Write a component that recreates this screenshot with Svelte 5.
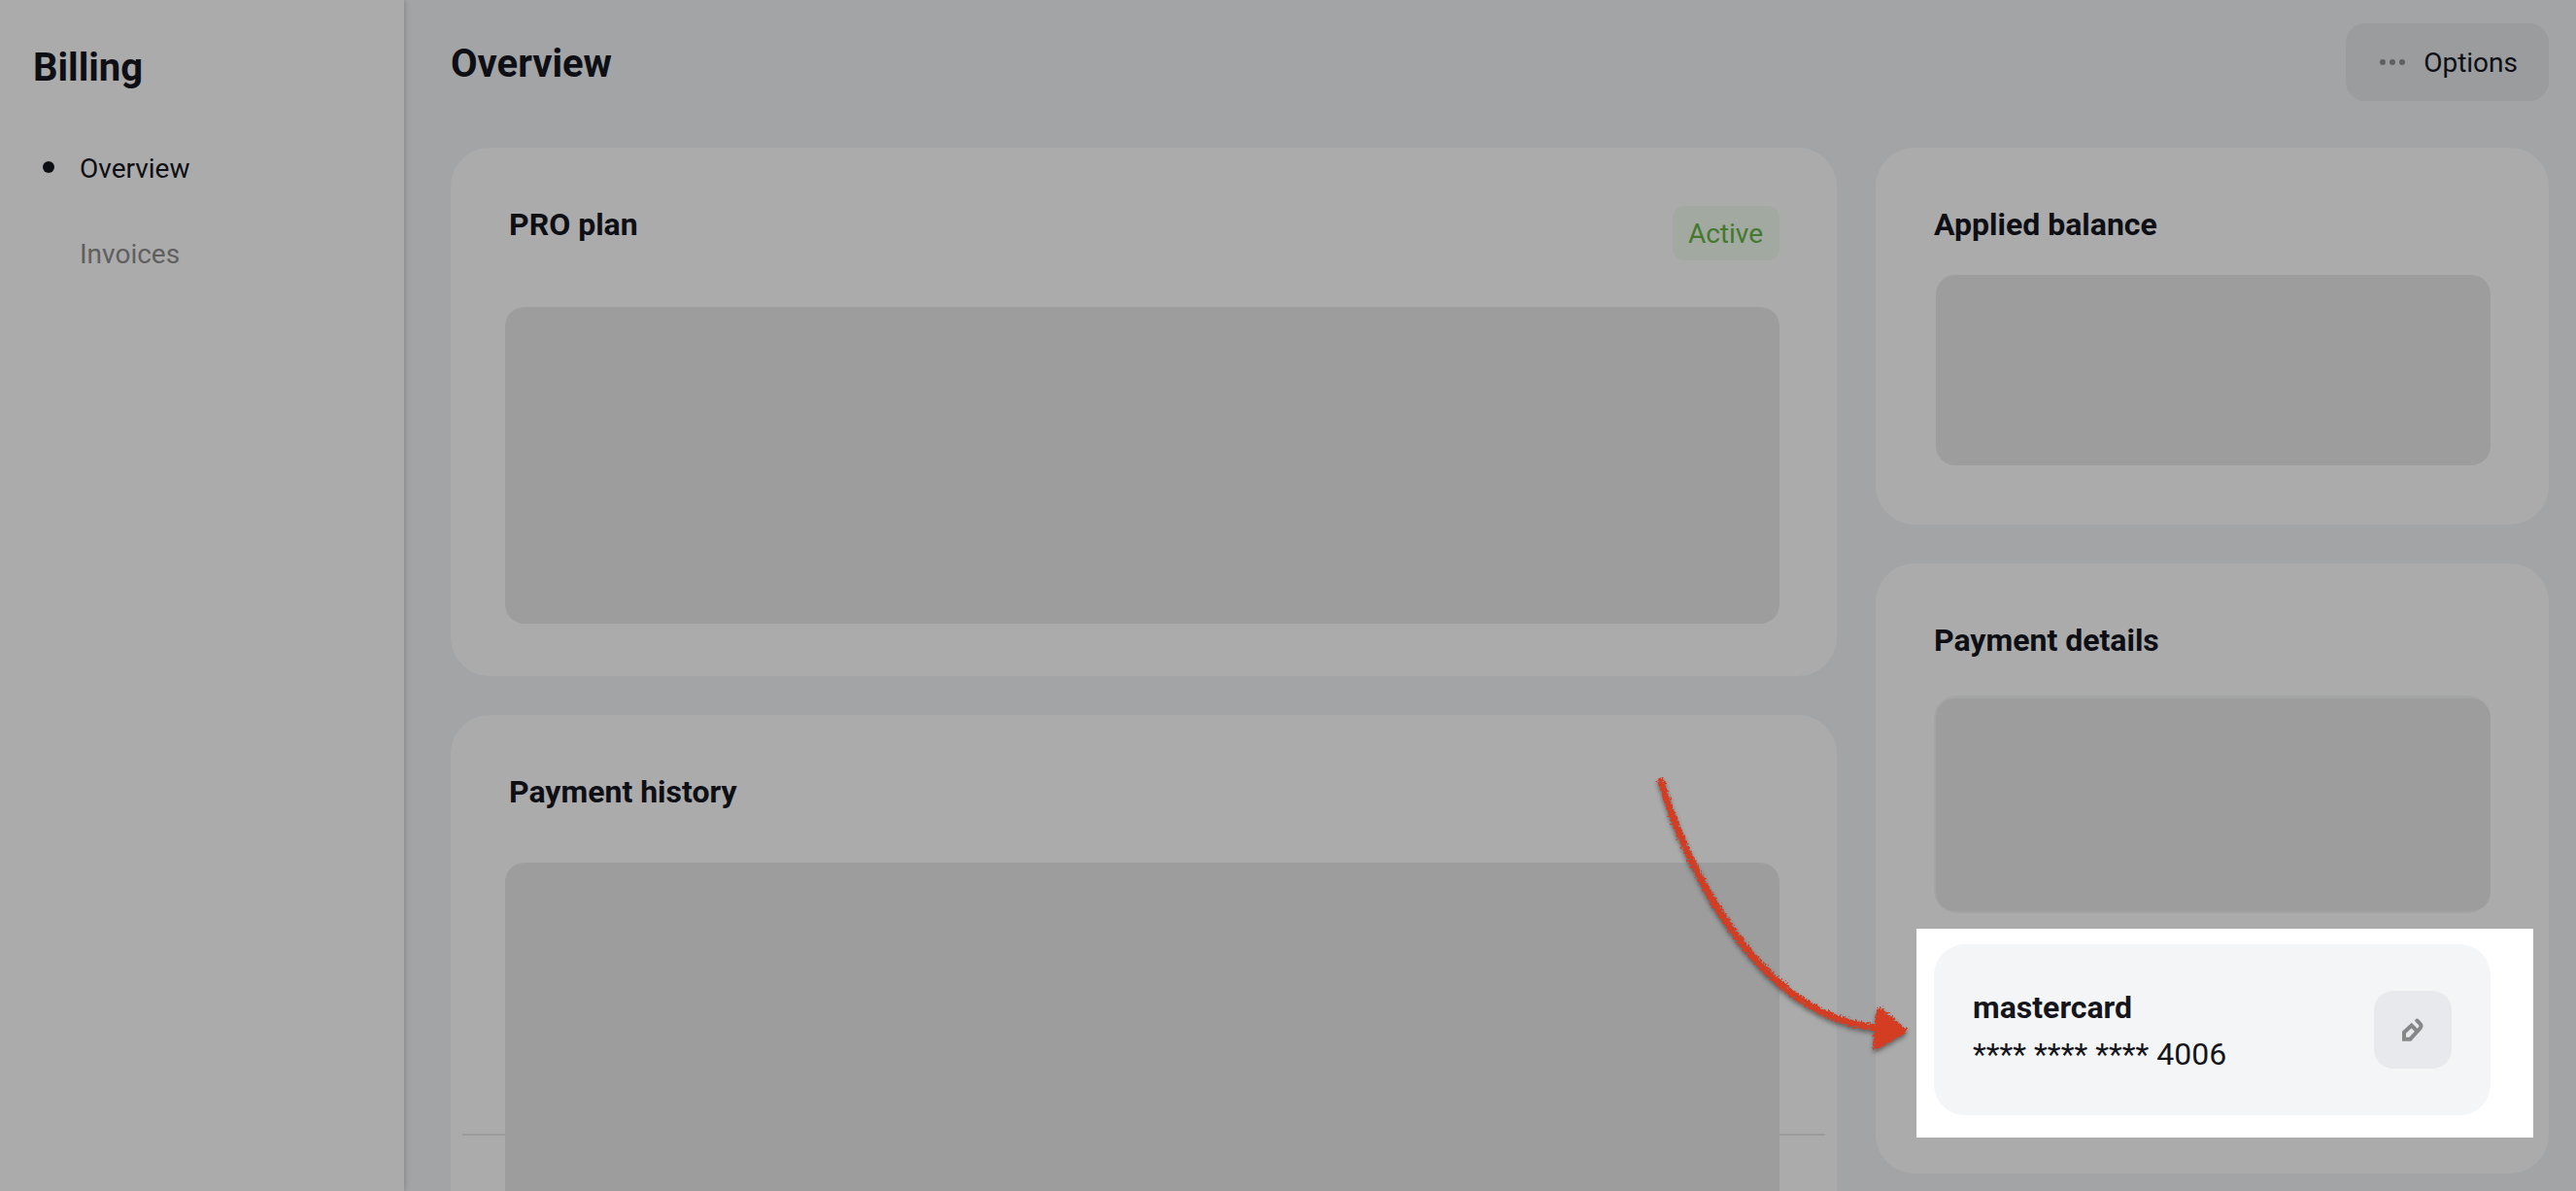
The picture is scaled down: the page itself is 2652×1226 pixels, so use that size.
<script>
  const navItems = [
    { label: 'Overview', active: true },
    { label: 'Invoices', active: false }
  ];

  export let card = {
    brand: 'mastercard',
    number: '**** **** **** 4006'
  };
</script>

<div class="layout">
  <aside class="sidebar">
    <h1 class="title">Billing</h1>
    <nav class="nav">
      {#each navItems as item}
        <a class="nav-item" class:active={item.active} href="#{item.label.toLowerCase()}">
          <span class="bullet"></span>
          {item.label}
        </a>
      {/each}
    </nav>
  </aside>

  <main class="main">
    <header class="header">
      <h2 class="title">Overview</h2>
      <button class="options-btn">
        <svg class="dots" viewBox="0 0 26 6" aria-hidden="true">
          <circle cx="3" cy="3" r="3" />
          <circle cx="13" cy="3" r="3" />
          <circle cx="23" cy="3" r="3" />
        </svg>
        <span class="options-label">Options</span>
      </button>
    </header>

    <div class="columns">
      <div class="column">
        <section class="card plan">
          <div class="card-head">
            <h3>PRO plan</h3>
            <span class="badge">Active</span>
          </div>
          <div class="block plan-block"></div>
        </section>

        <section class="card history">
          <h3>Payment history</h3>
          <div class="history-body">
            <hr class="row-line" />
            <div class="block history-block"></div>
          </div>
        </section>
      </div>

      <div class="column side">
        <section class="card balance">
          <h3>Applied balance</h3>
          <div class="block balance-block"></div>
        </section>

        <section class="card payment">
          <h3>Payment details</h3>
          <div class="details-box">
            <div class="block details-block"></div>
          </div>
          <div class="spotlight">
            <div class="method">
              <div class="method-text">
                <strong>{card.brand}</strong>
                <span>{card.number}</span>
              </div>
              <button class="edit-btn" aria-label="Edit payment method">
                <svg viewBox="0 0 24 26" aria-hidden="true">
                  <path d="M16.300 3.500L19.500 6.800Q21.500 9 19.500 11.500L9.300 22.700H3V15.700L10.700 8.500L16.500 14.500" />
                </svg>
              </button>
            </div>
          </div>
        </section>
      </div>
    </div>
  </main>

  <svg class="arrow" viewBox="0 0 270 290" aria-hidden="true">
    <defs>
      <filter id="crayon" x="-10%" y="-10%" width="120%" height="120%">
        <feTurbulence type="fractalNoise" baseFrequency="0.5" numOctaves="3" seed="4" result="noise" />
        <feDisplacementMap
          in="SourceGraphic"
          in2="noise"
          scale="8"
          xChannelSelector="R"
          yChannelSelector="G"
        />
      </filter>
    </defs>
    <g filter="url(#crayon)">
      <path class="shaft" d="M10 8C35 95 110 250 232 262" />
      <path class="head" d="M235 244L260 265L231 281Z" />
    </g>
  </svg>
</div>

<style>
  :global(body) {
    margin: 0;
    background: #a2a4a6;
  }

  .layout {
    position: relative;
    display: flex;
    height: 100vh;
    overflow: hidden;
    background: #a2a4a6;
    color: #0d0f14;
    font-family: Roboto, 'Liberation Sans', sans-serif;
    font-size: 28px;
    line-height: 40px;
  }

  .sidebar {
    flex: 0 0 416px;
    box-sizing: border-box;
    padding: 42px 34px;
    background: #ababab;
    box-shadow: 0 0 6px rgba(0, 0, 0, 0.25);
  }

  h1,
  h2,
  h3 {
    margin: 0;
    font-weight: 700;
  }

  .title {
    padding-top: 4px;
    font-size: 40px;
    line-height: 48px;
  }

  .nav {
    display: flex;
    flex-direction: column;
    gap: 48px;
    margin-top: 60px;
  }

  .nav-item {
    display: flex;
    align-items: flex-start;
    gap: 26px;
    padding-left: 10px;
    color: #5f5f60;
    text-decoration: none;
  }

  .bullet {
    width: 12px;
    height: 12px;
    margin-top: 12px;
    border-radius: 50%;
  }

  .active {
    color: #0d0f14;
  }

  .active .bullet {
    background: #0d0f14;
  }

  .main {
    flex: 1;
    min-width: 0;
    padding: 24px 28px 0 48px;
  }

  .header {
    display: flex;
    align-items: center;
    justify-content: space-between;
    margin-bottom: 48px;
  }

  button {
    border: none;
    color: inherit;
    font: inherit;
    cursor: pointer;
  }

  .options-btn {
    display: flex;
    align-items: center;
    gap: 19px;
    height: 80px;
    padding: 0 32px 0 35px;
    border-radius: 20px;
    background: #9b9c9e;
  }

  .options-label {
    padding-top: 2px;
  }

  .dots {
    width: 26px;
    height: 6px;
    fill: #5f6062;
  }

  .columns {
    display: flex;
    align-items: flex-start;
    gap: 40px;
  }

  .column {
    display: flex;
    flex: 1;
    flex-direction: column;
    gap: 40px;
    min-width: 0;
  }

  .side {
    flex: 0 0 693px;
  }

  .card {
    padding: 58px 60px;
    border-radius: 40px;
    background: #ababab;
  }

  h3 {
    font-size: 32px;
    line-height: 42px;
  }

  .card-head {
    display: flex;
    justify-content: space-between;
    align-items: flex-start;
  }

  .badge {
    margin-top: 2px;
    padding: 9px 17px 7px 16px;
    border-radius: 12px;
    background: #a2a9a0;
    color: #44782f;
  }

  .block {
    border-radius: 20px;
    background: #9d9d9d;
  }

  .plan {
    padding: 58px 59px 54px 56px;
  }

  .card-head h3 {
    padding-left: 4px;
  }

  .plan-block {
    height: 326px;
    margin-top: 48px;
  }

  .history {
    padding: 58px 12px 0;
  }

  .history h3 {
    padding-left: 48px;
  }

  .history-body {
    display: grid;
    margin-top: 52px;
  }

  .history-body > * {
    grid-area: 1 / 1;
  }

  .row-line {
    width: 100%;
    height: 2px;
    margin: 279px 0 0;
    border: none;
    background: #9b9b9b;
  }

  .history-block {
    height: 400px;
    margin: 0 47px 0 44px;
  }

  .balance-block {
    height: 196px;
    margin: 31px 0 3px 2px;
  }

  .payment {
    padding-bottom: 37px;
  }

  .details-box {
    margin-top: 36px;
    padding: 3px 0 2px 2px;
    border-radius: 24px;
    background: #a3a4a4;
  }

  .details-block {
    height: 219px;
  }

  .spotlight {
    margin: 16px -44px 0 -18px;
    padding: 16px 44px 23px 18px;
    background: #ffffff;
  }

  .method {
    display: flex;
    align-items: center;
    justify-content: space-between;
    padding: 39px 40px;
    border-radius: 32px;
    background: #f4f5f7;
    color: #14161c;
    font-size: 32px;
    line-height: 48px;
  }

  .method-text {
    display: flex;
    flex-direction: column;
    padding-top: 2px;
  }

  .edit-btn {
    display: flex;
    align-items: center;
    justify-content: center;
    width: 80px;
    height: 80px;
    padding: 0;
    border-radius: 20px;
    background: #e8e9ed;
  }

  .edit-btn svg {
    width: 24px;
    height: 26px;
    fill: none;
    stroke: #868789;
    stroke-width: 4;
    stroke-linecap: round;
  }

  .arrow {
    position: absolute;
    top: 796px;
    left: 1700px;
    width: 270px;
    height: 290px;
    filter: drop-shadow(0 3px 2px rgba(0, 0, 0, 0.4));
  }

  .shaft {
    fill: none;
    stroke: #d43c22;
    stroke-width: 7;
    stroke-linecap: round;
  }

  .head {
    fill: #d43c22;
    stroke: #d43c22;
    stroke-width: 6;
    stroke-linejoin: round;
  }
</style>
